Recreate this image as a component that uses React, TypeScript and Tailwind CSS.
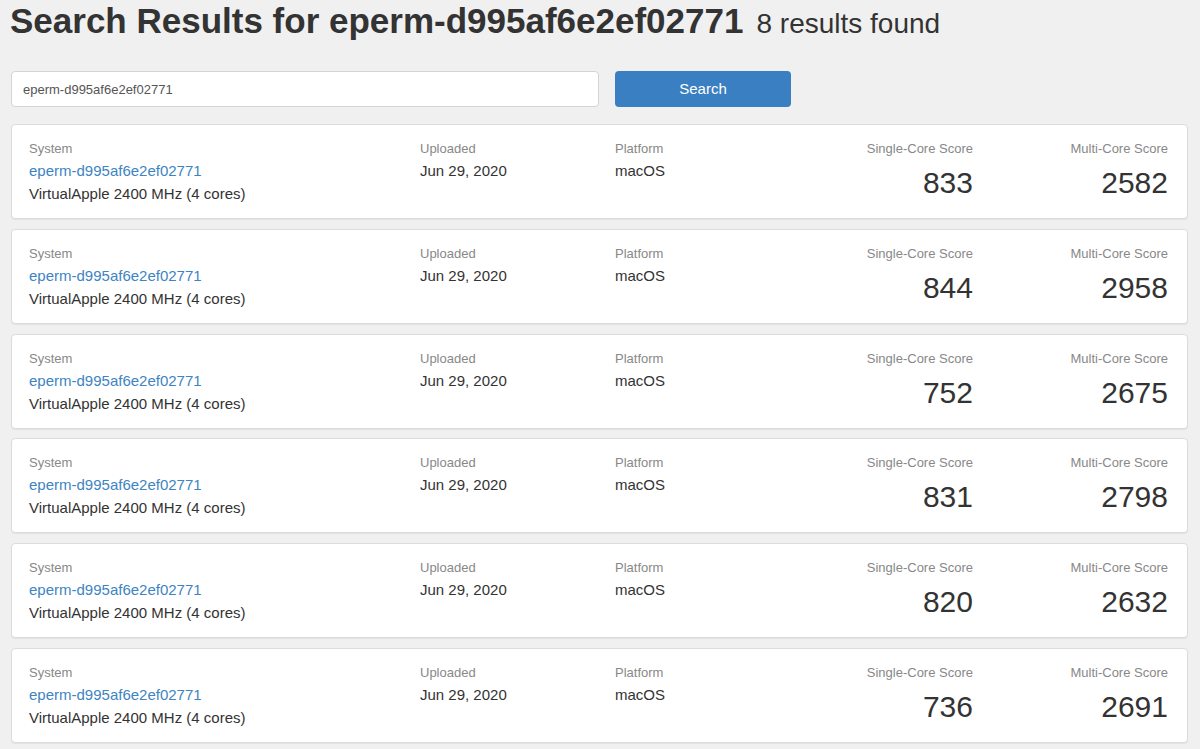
import React from 'react';

const results = [
    { single: 833, multi: 2582 },
    { single: 844, multi: 2958 },
    { single: 752, multi: 2675 },
    { single: 831, multi: 2798 },
    { single: 820, multi: 2632 },
    { single: 736, multi: 2691 },
];

const query = 'eperm-d995af6e2ef02771';

const App = () => {
    return (
        <div className="min-h-screen bg-[#f0f0f0] text-[#333] overflow-hidden" style={{ fontFamily: '"Liberation Sans", Arial, sans-serif' }}>
            <div className="px-[11px]">
                <h1 className="flex items-baseline gap-[13px] pt-[1px] leading-[40px] whitespace-nowrap -ml-[1px]">
                    <span className="text-[35px] font-bold">Search Results for {query}</span>
                    <span className="text-[28px] font-normal">8 results found</span>
                </h1>

                <div className="flex gap-[16px] mt-[27px] mb-[17px]">
                    <input
                        defaultValue={query}
                        className="w-[588px] h-[36px] bg-white border border-[#d4d4d4] rounded-[4px] px-[11px] text-[13px] text-[#555] outline-none"
                    />
                    <button className="w-[176px] h-[36px] bg-[#3a7fc1] rounded-[4px] text-white text-[15px]">
                        Search
                    </button>
                </div>

                <div className="flex flex-col gap-[9.8px] w-[1177px]">
                    {results.map((r, i) => (
                        <div key={i} className="bg-white border border-[#dcdcdc] rounded-[4px] shadow-[0_1px_1px_rgba(0,0,0,0.06)] h-[95px] pl-[17px] pr-[19px] pt-[15px]">
                            <div className="grid grid-cols-[391px_195px_minmax(0,1fr)_200px_195px]">
                                <div>
                                    <div className="text-[13px] text-[#888] leading-[18px]">System</div>
                                    <div className="text-[15px] text-[#3d84c3] leading-[22px] mt-[2px]">{query}</div>
                                    <div className="text-[15px] leading-[23px]">VirtualApple 2400 MHz (4 cores)</div>
                                </div>
                                <div>
                                    <div className="text-[13px] text-[#888] leading-[18px]">Uploaded</div>
                                    <div className="text-[15px] leading-[22px] mt-[2px]">Jun 29, 2020</div>
                                </div>
                                <div>
                                    <div className="text-[13px] text-[#888] leading-[18px]">Platform</div>
                                    <div className="text-[15px] leading-[22px] mt-[2px]">macOS</div>
                                </div>
                                <div className="text-right">
                                    <div className="text-[13px] text-[#888] leading-[18px]">Single-Core Score</div>
                                    <div className="text-[30px] leading-[36px] mt-[7px]">{r.single}</div>
                                </div>
                                <div className="text-right">
                                    <div className="text-[13px] text-[#888] leading-[18px]">Multi-Core Score</div>
                                    <div className="text-[30px] leading-[36px] mt-[7px]">{r.multi}</div>
                                </div>
                            </div>
                        </div>
                    ))}
                </div>
            </div>
        </div>
    );
};

export default App;
